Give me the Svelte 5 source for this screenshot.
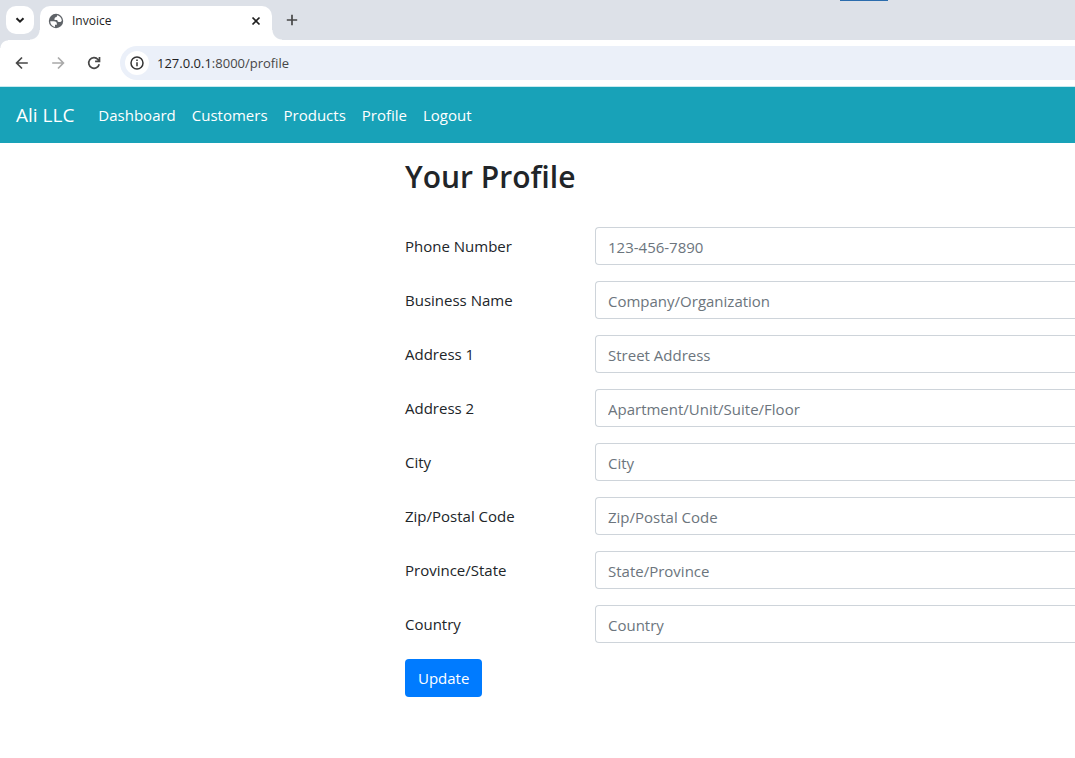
<script>
  const links = ['Dashboard', 'Customers', 'Products', 'Profile', 'Logout'];
  const fields = [
    { id: 'phone', label: 'Phone Number', hint: '123-456-7890' },
    { id: 'business', label: 'Business Name', hint: 'Company/Organization' },
    { id: 'address1', label: 'Address 1', hint: 'Street Address' },
    { id: 'address2', label: 'Address 2', hint: 'Apartment/Unit/Suite/Floor' },
    { id: 'city', label: 'City', hint: 'City' },
    { id: 'postal', label: 'Zip/Postal Code', hint: 'Zip/Postal Code' },
    { id: 'state', label: 'Province/State', hint: 'State/Province' },
    { id: 'country', label: 'Country', hint: 'Country' }
  ];
</script>

<div class="window">
  <div class="tabs">
    <span class="marker"></span>
    <button class="search" aria-label="Search tabs">
      <svg width="28" height="28" viewBox="0 0 28 28"><path d="M10.5 12.2 14 15.7l3.5-3.5" fill="none" stroke="#1f1f1f" stroke-width="2" /></svg>
    </button>
    <div class="tab">
      <svg width="18" height="18" viewBox="0 0 18 18">
        <circle cx="9" cy="9" r="7.200" fill="#5f6368" />
        <path fill="#fff" d="M3.200 9.300h3.600c2.300 0 3.300 1.100 3.100 3.400H8v2.300C5.200 14.600 3.200 12.200 3.200 9.300zM10.300 3.300c2.500.6 4.400 2.800 4.500 5.400-.5.900-1.200 1.300-2.200 1.300-1.600 0-2.300-.7-2.300-2.100H7.500C7.300 5.900 8 4.900 9.700 4.900c0-.7.200-1.300.6-1.600z" />
      </svg>
      <span class="title">Invoice</span>
      <button aria-label="Close tab">
        <svg width="16" height="16" viewBox="0 0 16 16"><path d="m4.500 4.500 7 7m0-7-7 7" stroke="#1f1f1f" stroke-width="1.700" /></svg>
      </button>
    </div>
    <button class="plus" aria-label="New tab">
      <svg width="16" height="16" viewBox="0 0 16 16"><path d="M8 2.800v10.400M2.800 8h10.400" stroke="#474747" stroke-width="1.700" /></svg>
    </button>
  </div>

  <div class="toolbar">
    <button aria-label="Back">
      <svg width="20" height="20" viewBox="0 0 20 20"><path d="M15.800 10H5m5-5.500L4.600 10l5.400 5.500" fill="none" stroke="#474747" stroke-width="1.700" /></svg>
    </button>
    <button aria-label="Forward">
      <svg width="20" height="20" viewBox="0 0 20 20"><path d="M4.200 10H15m-5-5.500 5.400 5.500-5.400 5.500" fill="none" stroke="#a9a9a9" stroke-width="1.700" /></svg>
    </button>
    <button aria-label="Reload">
      <svg width="20" height="20" viewBox="0 0 20 20"><path d="M15.200 11.200A5.300 5.300 0 1 1 14 6.500l1.300 1.600M15.500 4v4.300h-4.400" fill="none" stroke="#474747" stroke-width="1.700" /></svg>
    </button>
    <div class="address">
      <span class="info">
        <svg width="16" height="16" viewBox="0 0 16 16"><circle cx="8" cy="8" r="6" fill="none" stroke="#333" stroke-width="1.500" /><path d="M8 7.200v4M8 4.600v1.500" stroke="#333" stroke-width="1.500" /></svg>
      </span>
      <span class="url"><b>127.0.0.1</b>:8000/profile</span>
    </div>
  </div>

  <nav>
    <a class="brand" href="#home">Ali LLC</a>
    {#each links as link}
      <a href={'#' + link.toLowerCase()}>{link}</a>
    {/each}
  </nav>

  <main>
    <h1>Your Profile</h1>
    <form>
      {#each fields as field}
        <div class="row">
          <label for={field.id}>{field.label}</label>
          <input id={field.id} type="text" placeholder={field.hint} />
        </div>
      {/each}
      <button class="update" type="button">Update</button>
    </form>
  </main>
</div>

<style>
  :global(body) {
    margin: 0;
    background: #fff;
  }
  .window {
    font-family: "Open Sans", "Noto Sans", sans-serif;
    font-size: 15px;
    line-height: 24px;
    color: #212529;
    overflow: hidden;
  }
  button {
    padding: 0;
    border: 0;
    background: none;
    font: inherit;
  }
  svg {
    display: block;
  }
  .tabs {
    position: relative;
    display: flex;
    height: 40px;
    box-sizing: border-box;
    padding: 6px 6px 0;
    background: #dde1e8;
  }
  .marker {
    position: absolute;
    top: 0;
    left: 840px;
    width: 48px;
    height: 1px;
    background: #2b6cad;
  }
  .search {
    width: 28px;
    height: 28px;
    border-radius: 10px;
    background: #fff;
  }
  .tab {
    position: relative;
    display: flex;
    align-items: center;
    width: 232px;
    box-sizing: border-box;
    margin-left: 6px;
    padding: 0 8px 5px 7px;
    border-radius: 10px 10px 0 0;
    background: #fff;
  }
  .tab::before,
  .tab::after {
    content: "";
    position: absolute;
    bottom: 0;
    width: 10px;
    height: 10px;
  }
  .tab::before {
    right: 100%;
    background: radial-gradient(circle at 0 0, transparent 9px, #fff 10px);
  }
  .tab::after {
    left: 100%;
    background: radial-gradient(circle at 100% 0, transparent 9px, #fff 10px);
  }
  .title {
    flex: 1;
    margin-left: 7px;
    font-size: 12px;
    color: #1f1f1f;
  }
  .plus {
    height: 28px;
    margin-left: 12px;
  }
  .toolbar {
    display: flex;
    align-items: center;
    gap: 16px;
    padding: 6px 0 6px 12px;
    background: radial-gradient(circle at 8px 8px, #fff 7px, #dde1e8 8px) 0 0 / 8px 8px no-repeat #fff;
    border-bottom: 1px solid #c6eaf0;
  }
  .address {
    display: flex;
    align-items: center;
    flex: 1;
    height: 34px;
    box-sizing: border-box;
    padding-left: 5px;
    border-radius: 17px 0 0 17px;
    background: #ebf0f9;
  }
  .info {
    padding: 4px;
    border-radius: 50%;
    background: #fff;
  }
  .url {
    margin-left: 8px;
    font-size: 13px;
    color: #474747;
  }
  .url b {
    font-weight: 400;
    color: #1f1f1f;
  }
  nav {
    display: flex;
    align-items: center;
    gap: 16px;
    height: 56px;
    padding: 0 16px;
    background: #18a2b8;
  }
  nav a {
    color: #fff;
    text-decoration: none;
  }
  nav .brand {
    margin-right: 8px;
    font-size: 19px;
  }
  main {
    padding: 16px 0 0 405px;
  }
  h1 {
    margin: 0 0 32px;
    font-size: 30px;
    line-height: 36px;
    font-weight: 600;
  }
  .row {
    display: flex;
    align-items: center;
    margin-bottom: 16px;
  }
  label {
    width: 190px;
  }
  input {
    flex: 1;
    min-width: 0;
    height: 38px;
    box-sizing: border-box;
    padding: 2px 12px 0;
    border: 1px solid #ced4da;
    border-right: 0;
    border-radius: 4px 0 0 4px;
    background: #fff;
    font: inherit;
    color: #495057;
  }
  input::placeholder {
    color: #6c757d;
    opacity: 1;
  }
  .update {
    height: 38px;
    padding: 0 13px;
    border-radius: 4px;
    background: #007bff;
    color: #fff;
  }
</style>
